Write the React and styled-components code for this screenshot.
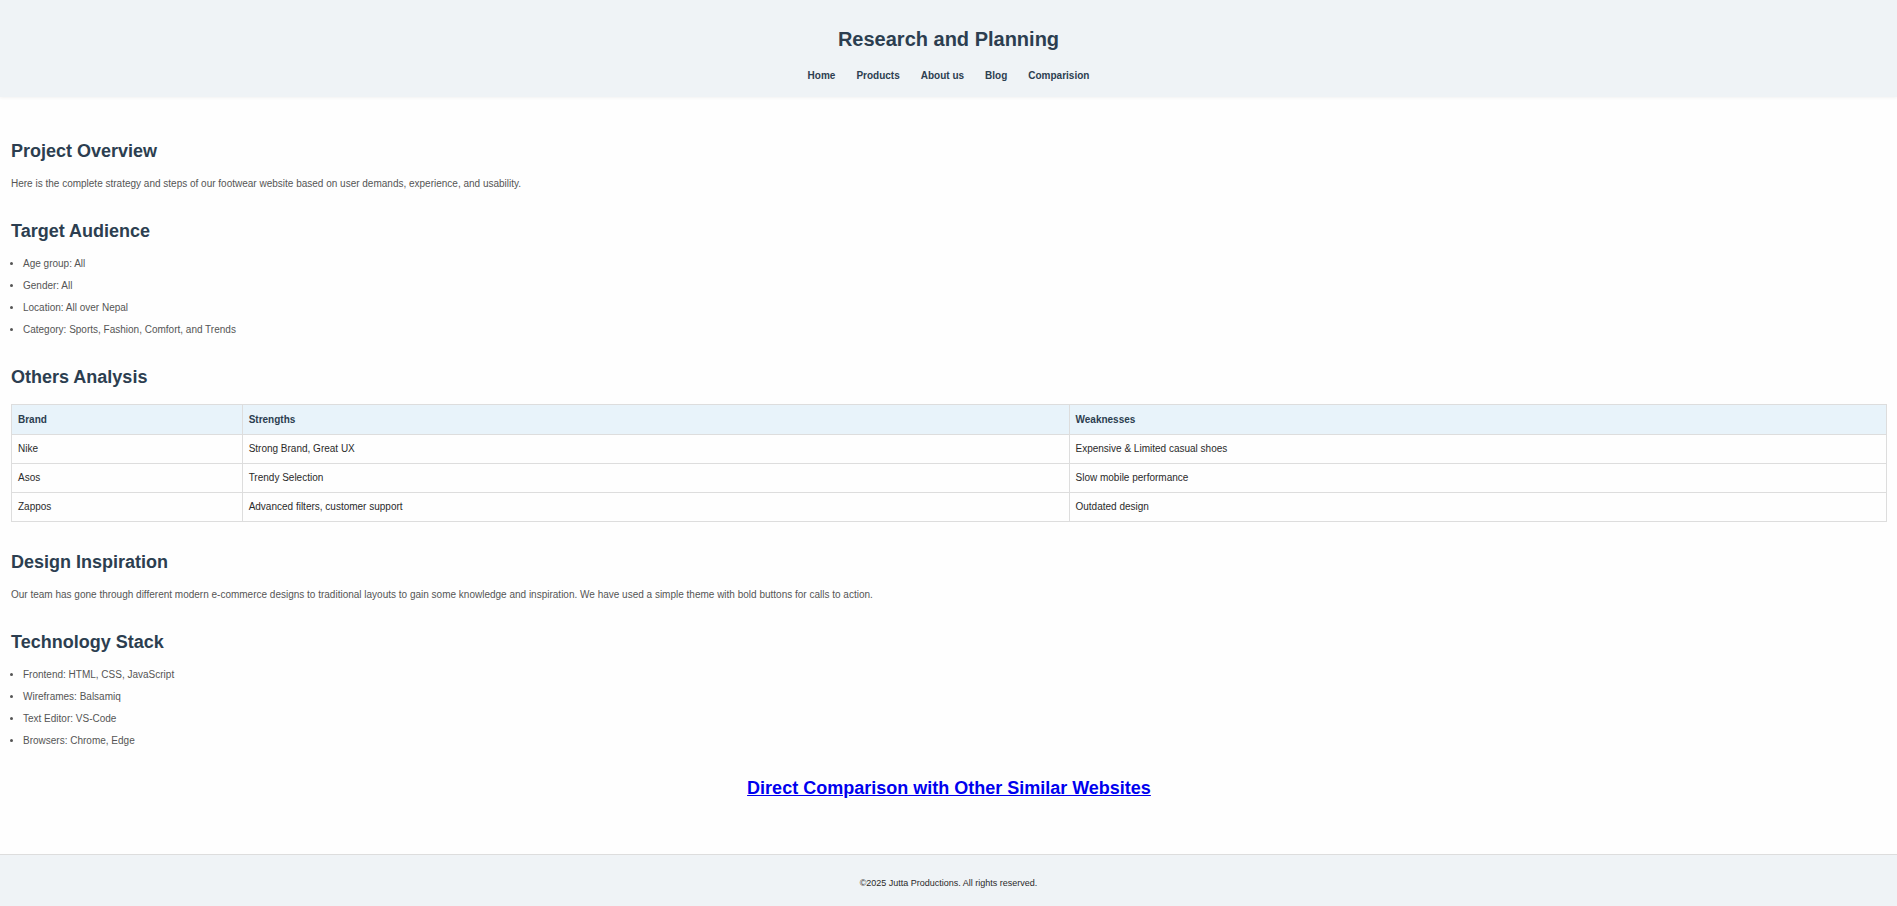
import React from "react";
import styled, { createGlobalStyle } from "styled-components";

const GlobalStyle = createGlobalStyle`
  * { box-sizing: border-box; margin: 0; padding: 0; }
  body { font-family: Arial, "Liberation Sans", sans-serif; font-size: 10px; line-height: 16px; background: #fefefe; color: #2a2a2a; }
`;
const Header = styled.header`
  padding: 23px 16px 13px;
  background: #eff3f6;
  text-align: center;
  box-shadow: 0 1px 3px rgba(0, 0, 0, 0.05);
`;
const Title = styled.h1`
  font-size: 20px;
  line-height: 32px;
  color: #2c3e50;
`;
const Nav = styled.nav`
  display: flex;
  justify-content: center;
  gap: 21px;
  margin-top: 13px;
`;
const NavLink = styled.a`
  font-weight: bold;
  color: #2c3e50;
  text-decoration: none;
`;
const Main = styled.main`
  padding: 38px 10px 50px 11px;
`;
const Section = styled.section`
  margin-bottom: 23px;
`;
const Heading = styled.h2`
  margin-bottom: 8px;
  font-size: 18px;
  line-height: 32px;
  color: #2c3e50;
`;
const Text = styled.p`
  line-height: 17px;
  color: #555;
`;
const List = styled.ul`
  padding-left: 12px;
`;
const Item = styled.li`
  margin-bottom: 5px;
  line-height: 17px;
  color: #555;
`;
const Table = styled.table`
  width: 100%;
  margin: 11px 0 24px;
  border-collapse: collapse;
`;
const Col = styled.col`
  width: ${(p) => p.$share};
`;
const Th = styled.th`
  padding: 6px;
  border: 1px solid #ddd;
  background: #e8f3fa;
  color: #2c3e50;
  line-height: 17px;
  text-align: left;
`;
const Td = styled.td`
  padding: 6px;
  border: 1px solid #ddd;
`;
const Compare = styled.h2`
  font-size: 18px;
  line-height: 32px;
  text-align: center;
`;
const CompareLink = styled.a`
  color: #0000ee;
`;
const Footer = styled.footer`
  padding: 20px 16px 15px;
  border-top: 1px solid #ddd;
  background: #eff3f6;
  text-align: center;
  font-size: 9px;
`;

const links = ["Home", "Products", "About us", "Blog", "Comparision"];
const audience = ["Age group: All", "Gender: All", "Location: All over Nepal", "Category: Sports, Fashion, Comfort, and Trends"];
const brands = [
  ["Nike", "Strong Brand, Great UX", "Expensive & Limited casual shoes"],
  ["Asos", "Trendy Selection", "Slow mobile performance"],
  ["Zappos", "Advanced filters, customer support", "Outdated design"],
];
const stack = ["Frontend: HTML, CSS, JavaScript", "Wireframes: Balsamiq", "Text Editor: VS-Code", "Browsers: Chrome, Edge"];

export default function App() {
  return (
    <>
      <GlobalStyle />
      <Header>
        <Title>Research and Planning</Title>
        <Nav>{links.map((l) => <NavLink key={l} href="#">{l}</NavLink>)}</Nav>
      </Header>
      <Main>
        <Section>
          <Heading>Project Overview</Heading>
          <Text>Here is the complete strategy and steps of our footwear website based on user demands, experience, and usability.</Text>
        </Section>
        <Section>
          <Heading>Target Audience</Heading>
          <List>{audience.map((t) => <Item key={t}>{t}</Item>)}</List>
        </Section>
        <Section>
          <Heading>Others Analysis</Heading>
          <Table>
            <colgroup><Col $share="12.3%" /><Col $share="44.1%" /><Col $share="43.6%" /></colgroup>
            <thead><tr><Th scope="col">Brand</Th><Th scope="col">Strengths</Th><Th scope="col">Weaknesses</Th></tr></thead>
            <tbody>{brands.map((r) => <tr key={r[0]}>{r.map((c) => <Td key={c}>{c}</Td>)}</tr>)}</tbody>
          </Table>
        </Section>
        <Section>
          <Heading>Design Inspiration</Heading>
          <Text>Our team has gone through different modern e-commerce designs to traditional layouts to gain some knowledge and inspiration. We have used a simple theme with bold buttons for calls to action.</Text>
        </Section>
        <Section>
          <Heading>Technology Stack</Heading>
          <List>{stack.map((t) => <Item key={t}>{t}</Item>)}</List>
        </Section>
        <Compare><CompareLink href="#">Direct Comparison with Other Similar Websites</CompareLink></Compare>
      </Main>
      <Footer>©2025 Jutta Productions. All rights reserved.</Footer>
    </>
  );
}
